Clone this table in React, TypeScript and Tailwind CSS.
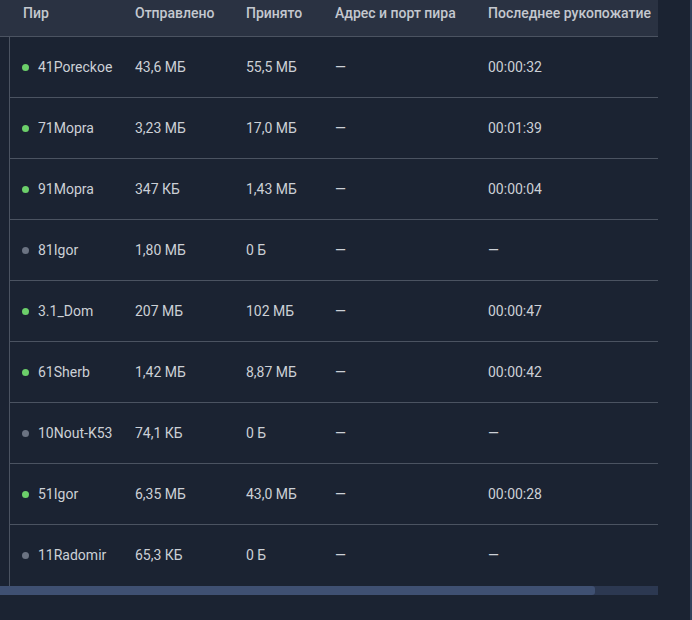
const peers = [
  { name: "41Poreckoe", sent: "43,6 МБ", recv: "55,5 МБ", hs: "00:00:32", on: true },
  { name: "71Mopra", sent: "3,23 МБ", recv: "17,0 МБ", hs: "00:01:39", on: true },
  { name: "91Mopra", sent: "347 КБ", recv: "1,43 МБ", hs: "00:00:04", on: true },
  { name: "81Igor", sent: "1,80 МБ", recv: "0 Б", hs: "—", on: false },
  { name: "3.1_Dom", sent: "207 МБ", recv: "102 МБ", hs: "00:00:47", on: true },
  { name: "61Sherb", sent: "1,42 МБ", recv: "8,87 МБ", hs: "00:00:42", on: true },
  { name: "10Nout-K53", sent: "74,1 КБ", recv: "0 Б", hs: "—", on: false },
  { name: "51Igor", sent: "6,35 МБ", recv: "43,0 МБ", hs: "00:00:28", on: true },
  { name: "11Radomir", sent: "65,3 КБ", recv: "0 Б", hs: "—", on: false },
];

export default function App() {
  return (
    <div
      className="w-[692px] h-[620px] bg-[#1b2332] flex text-[14px] text-[#ccd0d6]"
      style={{ fontFamily: "Roboto, 'Noto Sans', sans-serif" }}
    >
      <div className="w-[658px] flex flex-col">
        {/* Header */}
        <div className="grid grid-cols-[123px_111px_89px_153px_182px] h-[37px] bg-[#2a3242] border-b border-[#4b5361] font-medium text-[#c4c8cf]">
          <div className="pl-[23px] pt-[3px]">Пир</div>
          <div className="pl-3 pt-[3px]">Отправлено</div>
          <div className="pl-3 pt-[3px]">Принято</div>
          <div className="pl-3 pt-[3px]">Адрес и порт пира</div>
          <div className="pl-3 pt-[3px] whitespace-nowrap">Последнее рукопожатие</div>
        </div>

        {/* Rows */}
        <div className="ml-[9px] border-l border-[#4b5361] flex flex-col">
          {peers.map((p, i) => (
            <div
              key={p.name}
              className={`grid grid-cols-[113px_111px_89px_153px_182px] h-[61px] items-center ${
                i < peers.length - 1 ? "border-b border-[#4b5361]" : ""
              }`}
            >
              <div className="pl-3 flex items-center gap-[9px] whitespace-nowrap">
                <span
                  className={`w-[7px] h-[7px] rounded-full ${p.on ? "bg-[#6ccf6a]" : "bg-[#6b7382]"}`}
                />
                {p.name}
              </div>
              <div className="pl-3">{p.sent}</div>
              <div className="pl-3">{p.recv}</div>
              <div className="pl-3">—</div>
              <div className="pl-3">{p.hs}</div>
            </div>
          ))}
        </div>

        {/* Horizontal scrollbar */}
        <div className="h-[9px] bg-[#2c3851] flex">
          <div className="w-[595px] h-full bg-[#3f5072] rounded-r-[3px]" />
        </div>
      </div>
      <div className="flex-1" />
      <div className="w-[2px] bg-[#33425c]" />
    </div>
  );
}
